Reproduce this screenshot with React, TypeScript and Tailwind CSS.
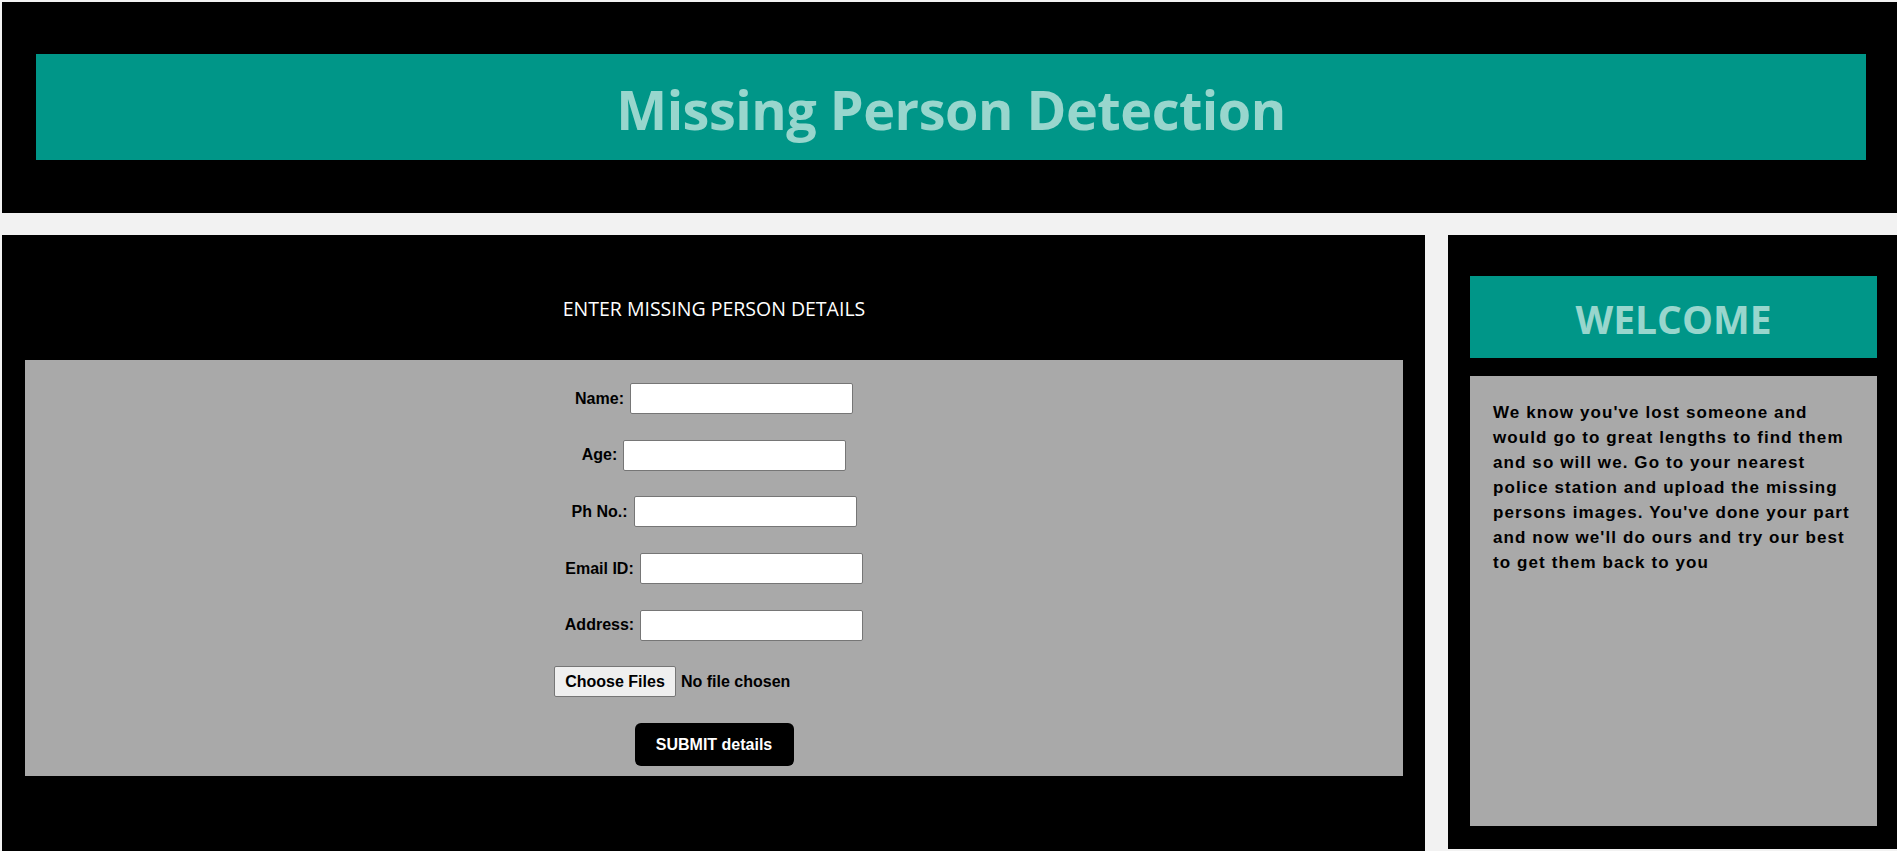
import React from "react";

const labelFont = { fontFamily: '"Liberation Sans", Arial, sans-serif' };

function Row({ label }: { label: string }) {
  return (
    <div className="flex items-center gap-[6px] h-[31px]">
      <label className="text-[16px] font-bold text-black font-['Liberation_Sans',Arial,sans-serif]">{label}</label>
      <input
        type="text"
        className="w-[223px] h-[31px] bg-white border border-[#767676] rounded-[2px] outline-none px-[2px] text-[16px]"
      />
    </div>
  );
}

export default function App() {
  return (
    <div className="h-[851px] w-[1897px] overflow-hidden bg-[#f2f2f2] pt-[2px] pl-[2px]" style={labelFont}>
      <header className="h-[211px] bg-black pt-[52px] pl-[34px] pr-[31px]">
        <div className="h-[106px] bg-[#009688] flex items-center justify-center pt-[3px]">
          <h1 className="font-['Open_Sans',sans-serif] font-bold text-[54px] leading-none tracking-[-0.5px] text-[#98d6cd]">
            Missing Person Detection
          </h1>
        </div>
      </header>

      <div className="mt-[22px] flex gap-[23px]">
        <section className="w-[1423px] h-[640px] shrink-0 bg-black pl-[23px] pr-[22px]">
          <h2 className="pt-[60px] leading-[28px] text-center text-white text-[19.5px] font-['Open_Sans',sans-serif] font-normal">
            ENTER MISSING PERSON DETAILS
          </h2>
          <div className="mt-[37px] h-[416px] bg-[#a9a9a9] pt-[23px] flex flex-col items-center gap-[25.7px]">
            <Row label="Name:" />
            <Row label="Age:" />
            <Row label="Ph No.:" />
            <Row label="Email ID:" />
            <Row label="Address:" />
            <div className="w-[320px] h-[31px] flex items-center gap-[5px]">
              <button className="h-[31px] w-[122px] bg-[#efefef] border border-[#767676] rounded-[2px] text-[16px] font-bold text-black">
                Choose Files
              </button>
              <span className="text-[16px] font-bold text-black">No file chosen</span>
            </div>
            <button className="w-[159px] h-[43px] bg-black text-white rounded-[6px] text-[16px] font-bold">
              SUBMIT details
            </button>
          </div>
        </section>

        <aside className="w-[449px] h-[614px] shrink-0 bg-black pt-[41px] pl-[22px] pr-[20px]">
          <div className="h-[82px] bg-[#009688] flex items-center justify-center pt-[2px]">
            <h2 className="font-['Open_Sans',sans-serif] font-bold text-[39px] leading-none tracking-[0px] text-[#98d6cd]">
              WELCOME
            </h2>
          </div>
          <div className="mt-[18px] h-[450px] bg-[#a9a9a9] pt-[24px] pl-[23px] pr-[20px]">
            <p className="text-[17px] leading-[25px] tracking-[1.1px] font-bold text-black">
              We know you've lost someone and would go to great lengths to find them and so will we. Go to your
              nearest police station and upload the missing persons images. You've done your part and now we'll do
              ours and try our best to get them back to you
            </p>
          </div>
        </aside>
      </div>
    </div>
  );
}
